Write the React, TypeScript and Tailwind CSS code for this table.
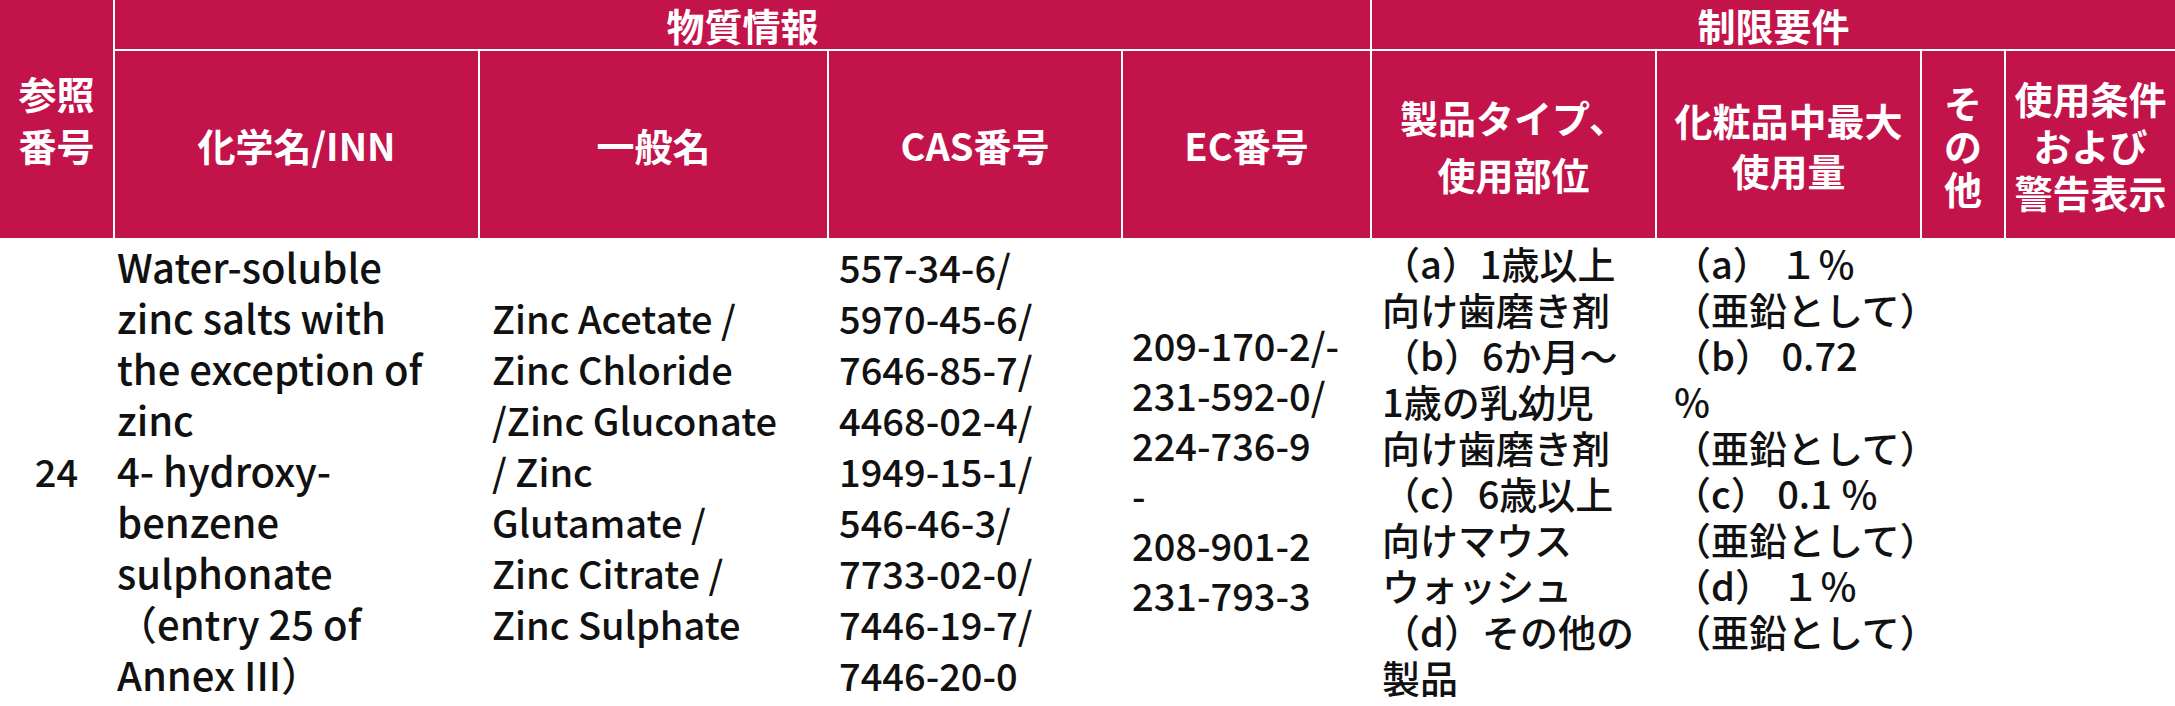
const FONT = { fontFamily: "'Noto Sans CJK JP', 'Noto Sans', sans-serif" };

const cols = "grid-cols-[113px_363px_347px_292px_247px_283px_263px_82px_1fr]";

function HeadCell({ children, className = "" }: { children: React.ReactNode; className?: string }) {
  return (
    <div className={`bg-[#c3134b] text-white font-bold text-[38px] flex flex-col items-center justify-center text-center whitespace-nowrap ${className}`}>
      {children}
    </div>
  );
}

function Lines({ lines, className = "" }: { lines: string[]; className?: string }) {
  return (
    <div className={`whitespace-pre ${className}`}>
      {lines.map((l, i) => (
        <div key={i}>{l}</div>
      ))}
    </div>
  );
}

const chemName = [
  "Water-soluble",
  "zinc salts with",
  "the exception of",
  "zinc",
  "4- hydroxy-",
  "benzene",
  "sulphonate",
  "（entry 25 of",
  "Annex III）",
];

const commonName = [
  "Zinc Acetate /",
  "Zinc Chloride",
  "/Zinc Gluconate",
  "/ Zinc",
  "Glutamate /",
  "Zinc Citrate /",
  "Zinc Sulphate",
];

const cas = [
  "557-34-6/",
  "5970-45-6/",
  "7646-85-7/",
  "4468-02-4/",
  "1949-15-1/",
  "546-46-3/",
  "7733-02-0/",
  "7446-19-7/",
  "7446-20-0",
];

const ec = ["209-170-2/-", "231-592-0/", "224-736-9", "-", "208-901-2", "231-793-3"];

const productType = [
  "（a）1歳以上",
  "向け歯磨き剤",
  "（b）6か月～",
  "1歳の乳幼児",
  "向け歯磨き剤",
  "（c）6歳以上",
  "向けマウス",
  "ウォッシュ",
  "（d）その他の",
  "製品",
];

const maxUse = [
  "（a） １％",
  "（亜鉛として）",
  "（b） 0.72",
  "％",
  "（亜鉛として）",
  "（c） 0.1 ％",
  "（亜鉛として）",
  "（d） １％",
  "（亜鉛として）",
];

export default function App() {
  return (
    <div className="w-[2175px] bg-white text-[#111]" style={FONT}>
      {/* header */}
      <div className={`grid ${cols} grid-rows-[49px_187px] gap-[2px] bg-white`}>
        <HeadCell className="row-span-2 leading-[52px]">
          <div>参照</div>
          <div>番号</div>
        </HeadCell>
        <HeadCell className="col-span-4 leading-none">物質情報</HeadCell>
        <HeadCell className="col-span-4 leading-none">制限要件</HeadCell>
        <HeadCell>化学名/INN</HeadCell>
        <HeadCell>一般名</HeadCell>
        <HeadCell>CAS番号</HeadCell>
        <HeadCell>EC番号</HeadCell>
        <HeadCell className="leading-[57px]">
          <div>製品タイプ、</div>
          <div>使用部位</div>
        </HeadCell>
        <HeadCell className="leading-[50px]">
          <div>化粧品中最大</div>
          <div>使用量</div>
        </HeadCell>
        <HeadCell className="leading-[43px]">
          <div>そ</div>
          <div>の</div>
          <div>他</div>
        </HeadCell>
        <HeadCell className="leading-[47px]">
          <div>使用条件</div>
          <div>および</div>
          <div>警告表示</div>
        </HeadCell>
      </div>

      {/* body row */}
      <div className={`grid ${cols} gap-x-[2px] items-center pt-[2px] pb-[10px] font-medium`}>
        <div className="text-center text-[38px] leading-[51px]">24</div>
        <Lines lines={chemName} className="pl-[2px] text-[40px] leading-[51px]" />
        <Lines lines={commonName} className="pl-[12px] text-[38px] leading-[51px]" />
        <Lines lines={cas} className="pl-[10px] text-[38px] leading-[51px]" />
        <Lines lines={ec} className="pl-[9px] text-[38px] leading-[50px]" />
        <Lines lines={productType} className="pl-[10px] text-[38px] leading-[46px]" />
        <Lines lines={maxUse} className="self-start pl-[16px] text-[38px] leading-[46px]" />
        <div />
        <div />
      </div>
    </div>
  );
}
